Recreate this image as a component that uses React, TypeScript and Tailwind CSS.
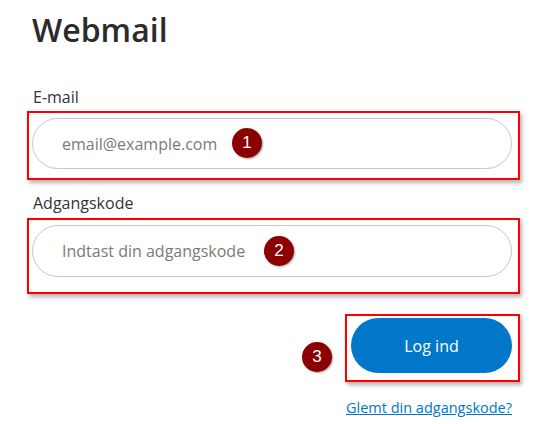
const Badge = ({ n }: { n: number }) => (
    <span className="absolute flex items-center justify-center w-[30px] h-[30px] rounded-full bg-[#8b0000] text-white text-[17px] font-['Liberation_Sans',sans-serif] shadow-[1px_1px_2px_rgba(0,0,0,0.35)]">
        {n}
    </span>
);

const App = () => {
    return (
        <div className="w-[543px] h-[424px] bg-white font-['Open_Sans',sans-serif] text-[#333]">
            {/* Heading */}
            <h1 className="pl-[32px] pt-[9px] text-[32px] leading-[41px] font-semibold text-[#2b2b2b]">Webmail</h1>

            {/* E-mail */}
            <label className="block pl-[33px] mt-[38px] text-[16px] leading-[18px] text-[#333]">E-mail</label>
            <div className="ml-[27px] mt-[5px] w-[493px] h-[69px] border-2 border-[#ff0000] pl-[3px] pt-[5px] shadow-[2px_3px_4px_rgba(0,0,0,0.3)]">
                <div className="relative w-[480px] h-[51px] rounded-full border border-[#c8c8c8] flex items-center pl-[29px]">
                    <span className="text-[16px] text-[#7a7a7a]">email@example.com</span>
                    <div className="absolute left-[199px] top-[9px]">
                        <Badge n={1} />
                    </div>
                </div>
            </div>

            {/* Adgangskode */}
            <label className="block pl-[33px] mt-[14px] text-[16px] leading-[18px] text-[#333]">Adgangskode</label>
            <div className="ml-[27px] mt-[6px] w-[493px] h-[76px] border-2 border-[#ff0000] pl-[3px] pt-[5px] shadow-[2px_3px_4px_rgba(0,0,0,0.3)]">
                <div className="relative w-[480px] h-[52px] rounded-full border border-[#c8c8c8] flex items-center pl-[29px]">
                    <span className="text-[16px] text-[#7a7a7a]">Indtast din adgangskode</span>
                    <div className="absolute left-[231px] top-[10px]">
                        <Badge n={2} />
                    </div>
                </div>
            </div>

            {/* Log ind */}
            <div className="flex justify-end items-center mt-[20px] pr-[23px]">
                <div className="relative">
                    <div className="absolute left-[-43px] top-[28px]">
                        <Badge n={3} />
                    </div>
                    <div className="w-[175px] h-[68px] border-2 border-[#ff0000] pl-[4px] pt-[2px] shadow-[2px_3px_4px_rgba(0,0,0,0.3)]">
                        <button className="w-[161px] h-[55px] rounded-full bg-[#0077c8] text-white text-[16px]">Log ind</button>
                    </div>
                </div>
            </div>

            <div className="flex justify-end pr-[31px] mt-[17px]">
                <a className="text-[14.5px] leading-[17px] text-[#0077c8] underline">Glemt din adgangskode?</a>
            </div>
        </div>
    );
};

export default App;
